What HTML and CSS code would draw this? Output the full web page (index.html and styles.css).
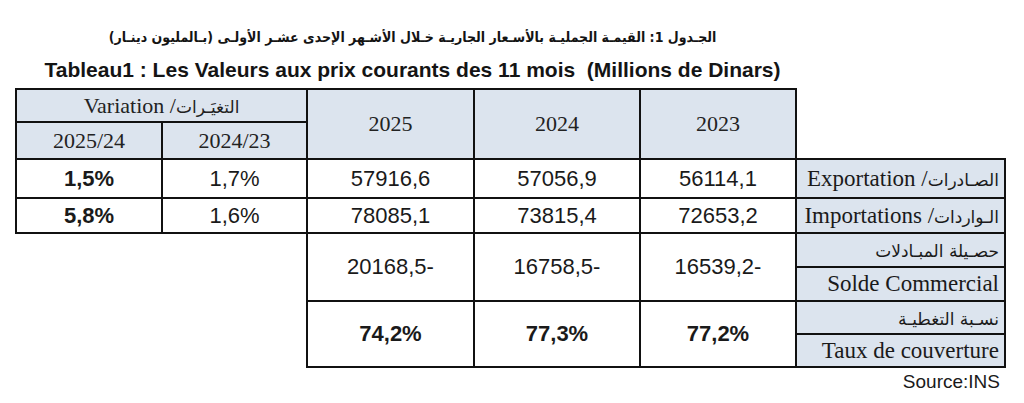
FILE: index.html
```html
<!DOCTYPE html>
<html lang="fr">
<head>
<meta charset="utf-8">
<title>Tableau1</title>
<link rel="stylesheet" href="styles.css">
</head>
<body>
<div class="page">
  <div class="titles">
    <h1 class="title-ar" dir="rtl">الجـدول 1: القيمـة الجمليـة بالأسـعار الجاريـة خـلال الأشـهر الإحدى عشـر الأولـى (بـالمليون دينـار)</h1>
    <h2 class="title-fr">Tableau1 : Les Valeurs aux prix courants des 11 mois&nbsp; (Millions de Dinars)</h2>
  </div>
  <table class="stats">
    <colgroup>
      <col class="c1"><col class="c2"><col class="c3"><col class="c4"><col class="c5"><col class="c6">
    </colgroup>
    <tr class="ra">
      <th colspan="2" class="hd">Variation /<span class="ar" dir="rtl">التغيَـرات</span></th>
      <th rowspan="2" class="hd">2025</th>
      <th rowspan="2" class="hd">2024</th>
      <th rowspan="2" class="hd">2023</th>
      <td rowspan="2" class="blank"></td>
    </tr>
    <tr class="rb">
      <th class="hd">2025/24</th>
      <th class="hd">2024/23</th>
    </tr>
    <tr class="rc">
      <td class="num b">1,5%</td>
      <td class="num">1,7%</td>
      <td class="num">57916,6</td>
      <td class="num">57056,9</td>
      <td class="num">56114,1</td>
      <td class="lbl">Exportation /<span class="ar" dir="rtl">الصـادرات</span></td>
    </tr>
    <tr class="rd">
      <td class="num b">5,8%</td>
      <td class="num">1,6%</td>
      <td class="num">78085,1</td>
      <td class="num">73815,4</td>
      <td class="num">72653,2</td>
      <td class="lbl">Importations /<span class="ar" dir="rtl">الـواردات</span></td>
    </tr>
    <tr class="re">
      <td rowspan="2" colspan="2" class="blank"></td>
      <td rowspan="2" class="num">20168,5-</td>
      <td rowspan="2" class="num">16758,5-</td>
      <td rowspan="2" class="num">16539,2-</td>
      <td class="lbl lbl-ar"><span class="ar" dir="rtl">حصـيلة المبـادلات</span></td>
    </tr>
    <tr class="rf">
      <td class="lbl">Solde Commercial</td>
    </tr>
    <tr class="rg">
      <td rowspan="2" colspan="2" class="blank"></td>
      <td rowspan="2" class="num b">74,2%</td>
      <td rowspan="2" class="num b">77,3%</td>
      <td rowspan="2" class="num b">77,2%</td>
      <td class="lbl lbl-ar"><span class="ar" dir="rtl">نسـبة التغطيـة</span></td>
    </tr>
    <tr class="rh">
      <td class="lbl">Taux de couverture</td>
    </tr>
  </table>
  <div class="source">Source:INS</div>
</div>
</body>
</html>
```

FILE: styles.css
```css
html, body {
  margin: 0;
  padding: 0;
  background: #ffffff;
  color: #141414;
}

.page {
  padding-left: 15px;
  width: 1009px;
}

.titles {
  width: 795px;
  text-align: center;
  padding-top: 26px;
}

.title-ar {
  margin: 0;
  font-family: "DejaVu Sans Condensed", "DejaVu Sans", sans-serif;
  font-weight: bold;
  font-size: 14px;
  line-height: 22px;
}

.title-fr {
  margin: 10px 0 0;
  font-family: "Liberation Sans Narrow", "Liberation Sans", sans-serif;
  font-weight: bold;
  font-size: 21px;
  line-height: 24px;
}

.stats {
  margin-top: 6px;
  border-collapse: collapse;
  table-layout: fixed;
  width: 989px;
}

.c1 { width: 146px; }
.c2 { width: 145px; }
.c3 { width: 167px; }
.c4 { width: 166px; }
.c5 { width: 156px; }
.c6 { width: 209px; }

.stats th,
.stats td {
  border: 2px solid #111111;
  padding: 0;
  text-align: center;
  vertical-align: middle;
}

.stats .blank {
  border: none;
  background: transparent;
}

.ra { height: 33px; }
.rb { height: 37px; }
.rc { height: 39px; }
.rd { height: 35px; }
.re { height: 34px; }
.rf { height: 34px; }
.rg { height: 33px; }
.rh { height: 33px; }

.hd {
  background: #dce4ee;
  font-family: "Liberation Serif", serif;
  font-weight: normal;
  font-size: 22px;
  color: #222222;
}

.ar {
  font-family: "DejaVu Sans", sans-serif;
  font-size: 17px;
}

.num {
  font-family: "Liberation Sans", sans-serif;
  font-size: 22px;
  color: #1a1a1a;
}

.num.b {
  font-weight: bold;
}

.lbl {
  background: #dce4ee;
  font-family: "Liberation Serif", serif;
  font-size: 23px;
  text-align: right !important;
  padding-right: 5px !important;
  white-space: nowrap;
  color: #1a1a1a;
}

.lbl-ar {
  vertical-align: top !important;
  padding-top: 3px !important;
}

.source {
  width: 985px;
  margin-top: 3px;
  text-align: right;
  font-family: "Liberation Sans", sans-serif;
  font-size: 19px;
  line-height: 22px;
  color: #1a1a1a;
}
```
